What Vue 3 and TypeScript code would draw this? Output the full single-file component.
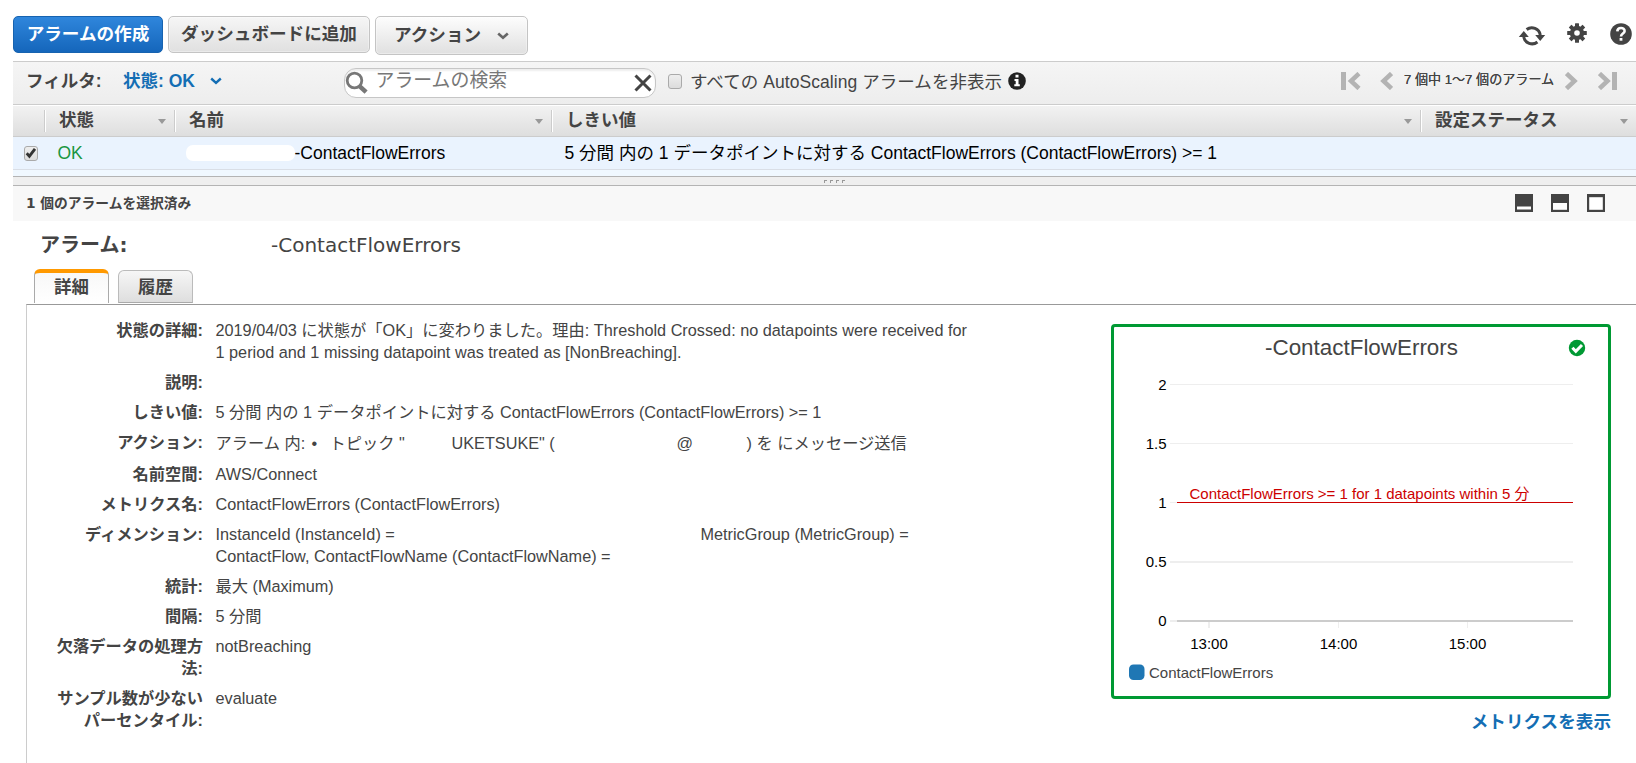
<script setup lang="ts">
import { ref } from 'vue'

interface Segment {
  text: string
  width?: number
}
interface Detail {
  label: string[]
  lines: Segment[][]
  tall?: boolean
}

const columns: string[] = ['状態', '名前', 'しきい値', '設定ステータス']
const tabs: string[] = ['詳細', '履歴']
const activeTab = ref('詳細')
const rowChecked = ref(true)

const details: Detail[] = [
  {
    label: ['状態の詳細:'],
    lines: [
      [{ text: '2019/04/03 に状態が「OK」に変わりました。理由: Threshold Crossed: no datapoints were received for' }],
      [{ text: '1 period and 1 missing datapoint was treated as [NonBreaching].' }],
    ],
  },
  { label: ['説明:'], lines: [[{ text: '' }]] },
  { label: ['しきい値:'], lines: [[{ text: '5 分間 内の 1 データポイントに対する ContactFlowErrors (ContactFlowErrors) >= 1' }]] },
  {
    label: ['アクション:'],
    tall: true,
    lines: [[
      { text: 'アラーム 内:', width: 96 },
      { text: '•', width: 18 },
      { text: 'トピック "', width: 122 },
      { text: 'UKETSUKE" (', width: 225 },
      { text: '@', width: 70 },
      { text: ') を にメッセージ送信' },
    ]],
  },
  { label: ['名前空間:'], lines: [[{ text: 'AWS/Connect' }]] },
  { label: ['メトリクス名:'], lines: [[{ text: 'ContactFlowErrors (ContactFlowErrors)' }]] },
  {
    label: ['ディメンション:'],
    lines: [
      [{ text: 'InstanceId (InstanceId) =', width: 485 }, { text: 'MetricGroup (MetricGroup) =' }],
      [{ text: 'ContactFlow, ContactFlowName (ContactFlowName) =' }],
    ],
  },
  { label: ['統計:'], lines: [[{ text: '最大 (Maximum)' }]] },
  { label: ['間隔:'], lines: [[{ text: '5 分間' }]] },
  { label: ['欠落データの処理方', '法:'], lines: [[{ text: 'notBreaching' }]] },
  { label: ['サンプル数が少ない', 'パーセンタイル:'], lines: [[{ text: 'evaluate' }]] },
]

const yTicks = [
  { label: '2', y: 57.5 },
  { label: '1.5', y: 116.5 },
  { label: '1', y: 175.5 },
  { label: '0.5', y: 235 },
  { label: '0', y: 294 },
]
const xTicks = [
  { label: '13:00', x: 95 },
  { label: '14:00', x: 224.5 },
  { label: '15:00', x: 353.5 },
]
</script>

<template>
  <main class="page">
    <header class="toolbar">
      <button class="btn primary">アラームの作成</button>
      <button class="btn dash">ダッシュボードに追加</button>
      <button class="btn action">
        <span>アクション</span>
        <svg width="12" height="8" viewBox="0 0 12 8"><path d="M1.2 1.5 6 5.8l4.8-4.3" fill="none" stroke="#666" stroke-width="2.6" /></svg>
      </button>
      <div class="tools">
        <svg class="refresh" width="28" height="22" viewBox="0 0 28 22">
          <g fill="none" stroke="#444" stroke-width="3">
            <path d="M8.6 4.5A8.6 8.6 0 0 1 22.3 10" />
            <path d="M19.4 17A8.6 8.6 0 0 1 5.7 12" />
          </g>
          <path d="M17.2 10h10l-5 6zM.8 12h10l-5-6z" fill="#444" />
        </svg>
        <svg class="gear" width="20" height="22" viewBox="-10 -11 20 22">
          <g fill="#444">
            <circle r="7.2" />
            <g v-for="a in [0, 45, 90, 135]" :key="a" :transform="`rotate(${a})`"><rect x="-2" y="-9.8" width="4" height="19.6" rx=".5" /></g>
          </g>
          <circle r="2.8" fill="#fff" />
        </svg>
        <svg class="help" width="22" height="22" viewBox="0 0 22 22">
          <circle cx="11" cy="11" r="10.8" fill="#444" />
          <path d="M7.3 8.4C7.4 3.8 14.8 4 14.6 8.1 14.5 10.5 11 10.6 11 13.4" fill="none" stroke="#fff" stroke-width="2.6" />
          <rect x="9.6" y="15" width="2.8" height="2.7" fill="#fff" />
        </svg>
      </div>
    </header>

    <section class="filters">
      <b class="filter-label">フィルタ:</b>
      <a class="state">状態: OK
        <svg width="12" height="8" viewBox="0 0 12 8"><path d="M1.2 1.5 6 5.8l4.8-4.3" fill="none" stroke="#146eb4" stroke-width="2.4" /></svg>
      </a>
      <div class="search">
        <svg width="24" height="24" viewBox="0 0 24 24">
          <circle cx="9.5" cy="9.5" r="7.3" fill="none" stroke="#777" stroke-width="2.8" />
          <path d="m14.8 15.4 6.3 5.8" stroke="#777" stroke-width="4.5" />
        </svg>
        <span>アラームの検索</span>
        <svg class="clear" width="18" height="18" viewBox="0 0 18 18"><path d="m1.5 1.5 15 15m0-15-15 15" stroke="#444" stroke-width="3" /></svg>
      </div>
      <i class="check"></i>
      <span class="hide-label">すべての AutoScaling アラームを非表示</span>
      <svg class="info" width="18" height="18" viewBox="0 0 18 18">
        <circle cx="9" cy="9" r="8.8" fill="#222" />
        <path d="M7.5 2.8h3v2.7h-3zM6.5 7h4v5.3h1.3v2H6.3v-2h1.4V9H6.5z" fill="#fff" />
      </svg>
      <nav class="pager">
        <svg class="first" width="20" height="18" viewBox="0 0 20 18"><path d="M0 0h5v18H0z" fill="#b3b3b3" /><path d="M18 1.5 10 9l8 7.5" fill="none" stroke="#b3b3b3" stroke-width="4.5" /></svg>
        <svg class="prev" width="13" height="18" viewBox="0 0 13 18"><path d="M11.5 1.5 3.5 9l8 7.5" fill="none" stroke="#b3b3b3" stroke-width="4.5" /></svg>
        <span>7 個中 1～7 個のアラーム</span>
        <svg class="next" width="13" height="18" viewBox="0 0 13 18"><path d="M1.5 1.5 9.5 9l-8 7.5" fill="none" stroke="#b3b3b3" stroke-width="4.5" /></svg>
        <svg class="last" width="20" height="18" viewBox="0 0 20 18"><path d="M14 0h5v18h-5z" fill="#b3b3b3" /><path d="M1.5 1.5 9.5 9l-8 7.5" fill="none" stroke="#b3b3b3" stroke-width="4.5" /></svg>
      </nav>
    </section>

    <section class="table">
      <div class="grid head">
        <span></span>
        <div v-for="c in columns" :key="c" class="th"><b>{{ c }}</b><i class="sort"></i></div>
      </div>
      <div class="grid row">
        <i class="check" :class="{ on: rowChecked }" @click="rowChecked = !rowChecked">
          <svg v-if="rowChecked" width="14" height="14" viewBox="0 0 14 14"><path d="m2.7 7.2 2.7 3L11 2.8" fill="none" stroke="#333" stroke-width="2.8" /></svg>
        </i>
        <span class="ok">OK</span>
        <span class="name"><i class="mask"></i>-ContactFlowErrors</span>
        <span class="threshold">5 分間 内の 1 データポイントに対する ContactFlowErrors (ContactFlowErrors) &gt;= 1</span>
        <span></span>
      </div>
      <div class="row-tail"></div>
    </section>

    <div class="splitter"><i v-for="n in 4" :key="n"></i></div>

    <section class="selection">
      <b>1 個のアラームを選択済み</b>
      <div class="layouts">
        <svg width="18" height="18"><path d="M0 0h18v18H0z" fill="#444" /><path d="M2 12.5h14v3H2z" fill="#fff" /></svg>
        <svg width="18" height="18"><path d="M0 0h18v18H0z" fill="#444" /><path d="M2 9h14v6.8H2z" fill="#fff" /></svg>
        <svg width="18" height="18"><path d="M0 0h18v18H0z" fill="#444" /><path d="M2.2 3.2h13.6v12.6H2.2z" fill="#fff" /></svg>
      </div>
    </section>

    <h1 class="title"><b>アラーム:</b><span>-ContactFlowErrors</span></h1>

    <div class="tabs">
      <button v-for="t in tabs" :key="t" class="tab" :class="{ active: t === activeTab }" @click="activeTab = t">{{ t }}</button>
    </div>

    <section class="panel">
      <dl class="details">
        <div v-for="d in details" :key="d.label[0]" class="detail" :class="{ tall: d.tall }">
          <dt><span v-for="l in d.label" :key="l">{{ l }}</span></dt>
          <dd>
            <div v-for="(line, i) in d.lines" :key="i" class="line">
              <span v-for="(s, j) in line" :key="j" :style="s.width ? { width: s.width + 'px' } : undefined">{{ s.text }}</span>
            </div>
          </dd>
        </div>
      </dl>

      <aside class="graph">
        <div class="card">
          <svg width="494" height="369" viewBox="0 0 494 369">
            <text class="g-title" x="151" y="27.5" textLength="193">-ContactFlowErrors</text>
            <circle cx="463" cy="21" r="8.2" fill="#093" />
            <path d="m458.4 20.8 3.4 3.6 6.2-6.4" fill="none" stroke="#fff" stroke-width="3" />
            <g v-for="t in yTicks" :key="t.label">
              <path :d="`M56 ${t.y}H459`" stroke="#eee" :stroke-width="t.y % 1 ? 1 : 2" />
              <text class="axis" x="52.5" :y="t.y + 5" text-anchor="end">{{ t.label }}</text>
            </g>
            <path d="M63 294H459" stroke="#ccc" stroke-width="2" />
            <path d="M63 175.5H459" stroke="#c00" />
            <g v-for="t in xTicks" :key="t.label">
              <path :d="`M${t.x} 295v6`" stroke="#eee" :stroke-width="t.x % 1 ? 1 : 2" />
              <text class="axis" :x="t.x" y="322" text-anchor="middle">{{ t.label }}</text>
            </g>
            <text class="axis limit" x="75.5" y="172" textLength="340">ContactFlowErrors &gt;= 1 for 1 datapoints within 5 分</text>
            <rect x="15" y="337.5" width="15.5" height="15.5" rx="4.5" fill="#1f77b4" />
            <text class="axis legend" x="35" y="351">ContactFlowErrors</text>
          </svg>
        </div>
        <a class="metrics">メトリクスを表示</a>
      </aside>
    </section>
  </main>
</template>

<style>
html, body { overflow: hidden; background: #fff; }
</style>

<style scoped>
* { box-sizing: border-box; }
svg { display: block; flex: none; }
.page {
  width: 1636px;
  height: 763px;
  overflow: hidden;
  padding-left: 13px;
  display: flex;
  flex-direction: column;
  background: #fff;
  color: #444;
  font-family: "Liberation Sans", "Noto Sans CJK JP", sans-serif;
  font-size: 17.5px;
  white-space: nowrap;
}
.toolbar { height: 61px; padding-top: 16px; display: flex; align-items: flex-start; flex: none; }
.btn {
  height: 37px;
  padding: 0 0 4px;
  border: 1px solid #c4c4c4;
  border-radius: 5px;
  background: linear-gradient(#f6f6f6, #e0e0e0);
  box-shadow: inset 0 0 0 1px rgba(255, 255, 255, .35);
  color: #444;
  font: bold 17.6px "Liberation Sans", "Noto Sans CJK JP", sans-serif;
  white-space: nowrap;
}
.btn.primary { width: 150px; background: linear-gradient(#2f86dc, #1566bb); border-color: #1763b0; box-shadow: none; color: #fff; }
.btn.dash { width: 202px; margin-left: 5px; }
.btn.action { width: 153px; height: 39px; margin-left: 5px; padding: 0 18px 5px; display: flex; align-items: center; justify-content: space-between; background: linear-gradient(#fdfdfd, #e0e0e0); }
.action svg { margin-top: 6px; }
.tools { margin-left: auto; width: 118px; display: flex; }
.refresh { margin-top: 9px; }
.gear { margin: 6px 0 0 21px; }
.help { margin: 7px 0 0 23px; }

.filters {
  height: 44px;
  border-top: 1px solid #ccc;
  border-bottom: 1px solid #ccc;
  background: linear-gradient(#f5f5f5, #ededed);
  display: flex;
  align-items: flex-start;
  padding: 10px 0 0 13px;
  flex: none;
  line-height: 18px;
}
.filter-label { width: 97px; }
.state { width: 221px; display: flex; align-items: flex-start; gap: 15px; color: #146eb4; font-weight: bold; }
.state svg { margin-top: 5px; }
.search {
  width: 312px;
  height: 30px;
  margin-top: -4px;
  border: 1px solid #c6c6c6;
  border-radius: 12px;
  background: #fff;
  box-shadow: inset 0 2px 2px #eee;
  display: flex;
  align-items: flex-start;
  padding: 2px 3px 0 1px;
  font-size: 18.9px;
  color: #777;
}
.search > svg:first-child { margin-left: -1px; }
.search span { margin: 1px 0 0 6.5px; }
.search .clear { margin: 3px 0 0 auto; }
.check {
  width: 14px;
  height: 15px;
  border: 1px solid #aaa;
  border-radius: 3px;
  background: linear-gradient(#eee, #dcdcdc);
  flex: none;
}
.filters .check { margin: 2px 0 0 12px; }
.hide-label { width: 313px; margin: 1px 0 0 8px; letter-spacing: .06px; }
.info { margin: 0 0 0 5px; }
.pager { margin-left: 315px; display: flex; align-items: flex-start; font-size: 13.1px; }
.pager span { width: 150px; margin: -1px 11px 0 11px; text-shadow: 0 0 .3px #444; }
.prev { margin-left: 19px; }
.last { margin-left: 20px; }

.table { flex: none; }
.grid { display: grid; grid-template-columns: 31px 130px 377px 869px 216px; }
.head { height: 32px; border-top: 1px solid #fff; border-bottom: 1px solid #ccc; background: linear-gradient(#f2f2f2, #dedede); align-items: center; }
.th { height: 22px; padding: 0 8px 0 14px; border-left: 1px solid #ccc; box-shadow: inset 1px 0 #fff; display: flex; align-items: center; justify-content: space-between; }
.th b { line-height: 20px; margin-top: -2px; }
.sort { border: 4.5px solid transparent; border-top: 5px solid #999; border-bottom: 0; margin-top: 1px; }
.row { height: 33px; border-bottom: 1px solid #d9dee6; background: #eaf3fe; color: #000; line-height: 32px; }
.row .check { margin: 9px 0 0 11px; }
.row .check svg { margin: -1px 0 0 -1px; }
.ok { padding-left: 13.5px; color: #1a9641; }
.name { padding-left: 12px; display: flex; }
.mask { width: 108.5px; height: 16px; margin: 8px 0 0; border-radius: 7px; background: #fff; }
.threshold { padding-left: 13.5px; }
.row-tail { height: 6px; background: #f0f8ff; }

.splitter { height: 10px; flex: none; border-top: 1px solid #b4b4b4; border-bottom: 1px solid #b4b4b4; background: #efefef; display: flex; gap: 3px; padding: 3px 0 0 811px; }
.splitter i { width: 3px; height: 3px; border-top: 1px solid #999; border-left: 1px solid #999; }
.selection { height: 35px; flex: none; background: #f8f8f8; display: flex; align-items: flex-start; justify-content: space-between; padding: 8px 31px 0 13px; font: 13.75px/18px "DejaVu Sans", "Noto Sans CJK JP", sans-serif; }
.layouts { display: flex; gap: 18px; }
.title { margin: 0; height: 48px; flex: none; display: flex; padding: 11px 0 0 27px; font: 20px/26px "DejaVu Sans", "Noto Sans CJK JP", sans-serif; }
.title b { width: 231px; }
.tabs { height: 35px; flex: none; display: flex; align-items: flex-end; gap: 9px; padding: 0 0 1px 21px; }
.tab { width: 75px; height: 33px; border: 1px solid #bbb; border-bottom-color: #aaa; border-radius: 6px 6px 0 0; background: linear-gradient(#f6f6f6, #dedede); color: #444; padding: 0 0 2px; font: bold 17.4px "Liberation Sans", "Noto Sans CJK JP", sans-serif; }
.tab.active { height: 34px; border-color: #aaa; border-top: 4px solid #f90; border-bottom: 0; background: linear-gradient(#f8f8f8, #fff); padding-bottom: 5px; }
.panel { flex: 1; margin-left: 13px; border-top: 1px solid #999; border-left: 1px solid #ccc; display: flex; padding-top: 14px; }
.details { margin: 0; width: 1084px; font-size: 16.25px; line-height: 22px; display: flex; flex-direction: column; gap: 8px; }
.detail { display: flex; gap: 12.5px; }
.detail.tall { height: 24px; padding-top: 1px; }
.tall dt { margin-top: -1px; }
dt { width: 176px; font-weight: bold; text-align: right; flex: none; }
dt span { display: block; height: 22px; }
dd { margin: 0; }
.line { height: 22px; display: flex; }
.graph { width: 500px; padding-top: 5px; }
.card { width: 500px; height: 375px; border: 3px solid #093; border-radius: 4px; }
.g-title { font-size: 22.4px; fill: #444; }
.axis { font-size: 15px; fill: #000; }
.axis.limit { fill: #c00; }
.axis.legend { fill: #444; }
.metrics { display: block; margin-top: 11px; text-align: right; font-weight: bold; font-size: 17.6px; line-height: 24px; color: #146eb4; }
</style>
